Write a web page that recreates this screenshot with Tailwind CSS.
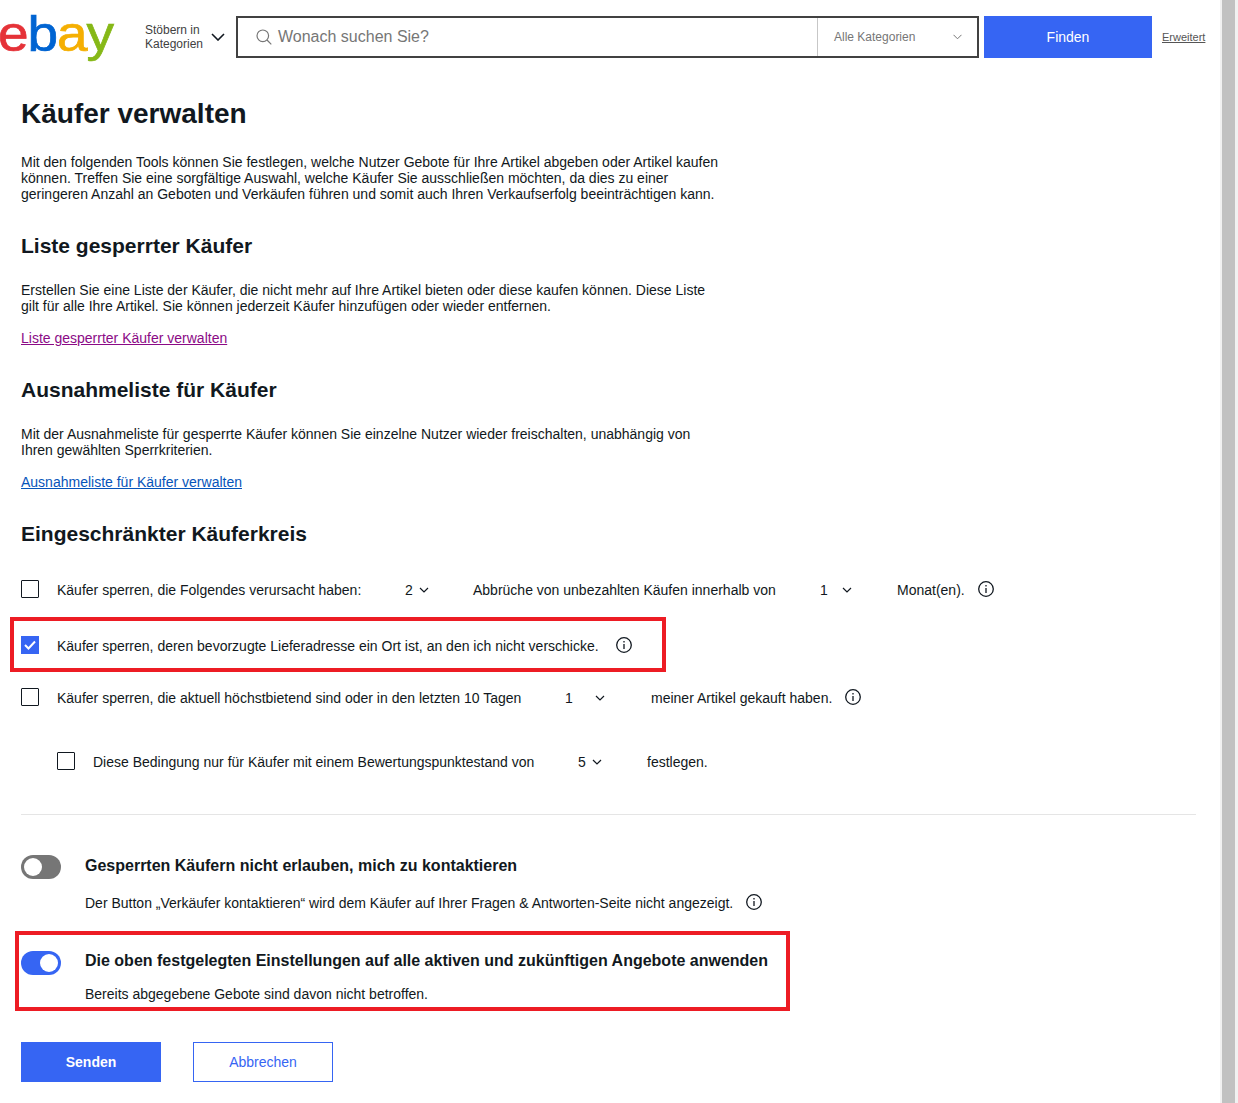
<!DOCTYPE html>
<html lang="de">
<head>
<meta charset="utf-8">
<title>Käufer verwalten</title>
<script src="https://cdn.jsdelivr.net/npm/@tailwindcss/browser@4"></script>
</head>
<body class="bg-white font-['Liberation_Sans',Arial,sans-serif] text-[14px] leading-4 text-[#111820] h-[1103px] overflow-hidden">
<div class="flex h-[1103px]">
<main class="w-[1220px] shrink-0">
  <header class="flex items-center h-[74px]">
    <div class="w-[127px] h-[60px] shrink-0 relative">
      <div class="absolute left-[-2px] top-[-3px] flex origin-left scale-x-[1.1] text-[50px] leading-[60px] tracking-[-1px] [-webkit-text-stroke:0.7px]" aria-label="ebay">
        <span class="text-[#e53238]">e</span><span class="text-[#0064d2]">b</span><span class="text-[#f5af02]">a</span><span class="text-[#86b817]">y</span>
      </div>
    </div>
    <div class="w-[64px] ml-[18px] text-[12px] leading-[14px] text-[#41413f] shrink-0">Stöbern in Kategorien</div>
    <svg class="w-[14px] h-[8px] ml-[2px] shrink-0" viewBox="0 0 14 8" fill="none" stroke="#111820" stroke-width="1.6"><path d="M1 1l6 6 6-6"/></svg>
    <div class="ml-[11px] flex w-[743px] h-[42px] border-[2px] border-[#414141] shrink-0">
      <div class="flex items-center flex-1 pl-[18px]">
        <svg class="w-[16px] h-[16px] shrink-0" viewBox="0 0 16 16" fill="none" stroke="#767676" stroke-width="1.2"><circle cx="6.8" cy="6.8" r="5.8"/><path d="M11 11l4.3 4.3"/></svg>
        <span class="ml-[6px] text-[16px] text-[#767676]">Wonach suchen Sie?</span>
      </div>
      <div class="flex items-center w-[160px] border-l border-[#c7c7c7] pl-[16px] pr-[15px] justify-between text-[12px] text-[#767676]">
        <span>Alle Kategorien</span>
        <svg class="w-[9px] h-[6px]" viewBox="0 0 9 6" fill="none" stroke="#767676" stroke-width="1"><path d="M.5.8l4 4 4-4"/></svg>
      </div>
    </div>
    <div class="ml-[5px] w-[168px] h-[42px] bg-[#3665f3] text-white flex items-center justify-center shrink-0">Finden</div>
    <a class="ml-[10px] text-[11px] text-[#555] underline">Erweitert</a>
  </header>

  <div class="pl-[21px]">
    <h1 class="text-[28px] leading-[32px] font-bold mt-[24px]">Käufer verwalten</h1>
    <p class="w-[700px] mt-[24px]">Mit den folgenden Tools können Sie festlegen, welche Nutzer Gebote für Ihre Artikel abgeben oder Artikel kaufen können. Treffen Sie eine sorgfältige Auswahl, welche Käufer Sie ausschließen möchten, da dies zu einer geringeren Anzahl an Geboten und Verkäufen führen und somit auch Ihren Verkaufserfolg beeinträchtigen kann.</p>

    <h2 class="text-[21px] leading-6 font-bold mt-[32px]">Liste gesperrter Käufer</h2>
    <p class="w-[700px] mt-[24px]">Erstellen Sie eine Liste der Käufer, die nicht mehr auf Ihre Artikel bieten oder diese kaufen können. Diese Liste gilt für alle Ihre Artikel. Sie können jederzeit Käufer hinzufügen oder wieder entfernen.</p>
    <a class="block mt-[16px] underline text-[#8b0a86]">Liste gesperrter Käufer verwalten</a>

    <h2 class="text-[21px] leading-6 font-bold mt-[32px]">Ausnahmeliste für Käufer</h2>
    <p class="w-[700px] mt-[24px]">Mit der Ausnahmeliste für gesperrte Käufer können Sie einzelne Nutzer wieder freischalten, unabhängig von Ihren gewählten Sperrkriterien.</p>
    <a class="block mt-[16px] underline text-[#0654ba]">Ausnahmeliste für Käufer verwalten</a>

    <h2 class="text-[21px] leading-6 font-bold mt-[32px]">Eingeschränkter Käuferkreis</h2>

    <div class="flex items-center mt-[34px] h-[18px]">
      <span class="w-[18px] h-[18px] border border-[#111820] rounded-[1px] shrink-0"></span>
      <span class="ml-[18px] w-[348px] shrink-0 pt-[2px]">Käufer sperren, die Folgendes verursacht haben:</span>
      <span class="w-[68px] shrink-0 flex items-center gap-[6px] pt-[2px]">2 <svg class="w-[10px] h-[6px]" viewBox="0 0 10 6" fill="none" stroke="#111820" stroke-width="1.2"><path d="M1 1l4 4 4-4"/></svg></span>
      <span class="w-[347px] shrink-0 pt-[2px]">Abbrüche von unbezahlten Käufen innerhalb von</span>
      <span class="w-[77px] shrink-0 flex items-center gap-[14px] pt-[2px]">1 <svg class="w-[10px] h-[6px]" viewBox="0 0 10 6" fill="none" stroke="#111820" stroke-width="1.2"><path d="M1 1l4 4 4-4"/></svg></span>
      <span class="pt-[2px]">Monat(en).</span>
      <svg class="w-[18px] h-[18px] ml-[12px]" viewBox="0 0 18 18" fill="none" stroke="#111820" stroke-width="1.3"><circle cx="9" cy="9" r="7.3"/><path d="M9 8v5M9 5v1.5"/></svg>
    </div>

    <div class="flex items-center ml-[-11px] mt-[19px] w-[656px] h-[55px] border-[4px] border-[#ed1c24] pl-[7px]">
      <span class="w-[18px] h-[18px] bg-[#3665f3] flex items-center justify-center shrink-0">
        <svg class="w-[12px] h-[10px]" viewBox="0 0 12 10" fill="none" stroke="#fff" stroke-width="2"><path d="M1 5l3.5 3.5L11 1.5"/></svg>
      </span>
      <span class="ml-[18px] pt-[2px]">Käufer sperren, deren bevorzugte Lieferadresse ein Ort ist, an den ich nicht verschicke.</span>
      <svg class="w-[18px] h-[18px] ml-[16px]" viewBox="0 0 18 18" fill="none" stroke="#111820" stroke-width="1.3"><circle cx="9" cy="9" r="7.3"/><path d="M9 8v5M9 5v1.5"/></svg>
    </div>

    <div class="flex items-center mt-[16px] h-[18px]">
      <span class="w-[18px] h-[18px] border border-[#111820] rounded-[1px] shrink-0"></span>
      <span class="ml-[18px] w-[508px] shrink-0 pt-[2px]">Käufer sperren, die aktuell höchstbietend sind oder in den letzten 10 Tagen</span>
      <span class="w-[86px] shrink-0 flex items-center gap-[22px] pt-[2px]">1 <svg class="w-[10px] h-[6px]" viewBox="0 0 10 6" fill="none" stroke="#111820" stroke-width="1.2"><path d="M1 1l4 4 4-4"/></svg></span>
      <span class="pt-[2px]">meiner Artikel gekauft haben.</span>
      <svg class="w-[18px] h-[18px] ml-[12px]" viewBox="0 0 18 18" fill="none" stroke="#111820" stroke-width="1.3"><circle cx="9" cy="9" r="7.3"/><path d="M9 8v5M9 5v1.5"/></svg>
    </div>

    <div class="flex items-center mt-[46px] ml-[36px] h-[18px]">
      <span class="w-[18px] h-[18px] border border-[#111820] rounded-[1px] shrink-0"></span>
      <span class="ml-[18px] w-[485px] shrink-0 pt-[2px]">Diese Bedingung nur für Käufer mit einem Bewertungspunktestand von</span>
      <span class="w-[69px] shrink-0 flex items-center gap-[6px] pt-[2px]">5 <svg class="w-[10px] h-[6px]" viewBox="0 0 10 6" fill="none" stroke="#111820" stroke-width="1.2"><path d="M1 1l4 4 4-4"/></svg></span>
      <span class="pt-[2px]">festlegen.</span>
    </div>

    <hr class="w-[1175px] mt-[44px] border-t border-[#e5e5e5]">

    <div class="flex items-center mt-[40px] h-[24px]">
      <span class="w-[40px] h-[24px] rounded-full bg-[#767676] flex items-center pl-[3px] shrink-0"><span class="w-[18px] h-[18px] rounded-full bg-white"></span></span>
      <span class="ml-[24px] text-[16px] font-bold pb-[2px]">Gesperrten Käufern nicht erlauben, mich zu kontaktieren</span>
    </div>
    <div class="flex items-center ml-[64px] mt-[14px] h-[18px]">
      <span class="pt-[2px]">Der Button „Verkäufer kontaktieren“ wird dem Käufer auf Ihrer Fragen &amp; Antworten-Seite nicht angezeigt.</span>
      <svg class="w-[18px] h-[18px] ml-[12px]" viewBox="0 0 18 18" fill="none" stroke="#111820" stroke-width="1.3"><circle cx="9" cy="9" r="7.3"/><path d="M9 8v5M9 5v1.5"/></svg>
    </div>

    <div class="ml-[-6px] mt-[20px] w-[775px] h-[80px] border-[4px] border-[#ed1c24] pl-[2px] pt-[16px]">
      <div class="flex items-center h-[24px]">
        <span class="w-[40px] h-[24px] rounded-full bg-[#3665f3] flex items-center justify-end pr-[3px] shrink-0"><span class="w-[18px] h-[18px] rounded-full bg-white"></span></span>
        <span class="ml-[24px] text-[16px] font-bold whitespace-nowrap pb-[4px]">Die oben festgelegten Einstellungen auf alle aktiven und zukünftigen Angebote anwenden</span>
      </div>
      <p class="ml-[64px] mt-[11px]">Bereits abgegebene Gebote sind davon nicht betroffen.</p>
    </div>

    <div class="flex gap-[32px] mt-[31px]">
      <div class="w-[140px] h-[40px] bg-[#3665f3] text-white font-bold flex items-center justify-center">Senden</div>
      <div class="w-[140px] h-[40px] border border-[#3665f3] text-[#3665f3] flex items-center justify-center">Abbrechen</div>
    </div>
  </div>
</main>
<div class="w-[18px] shrink-0 h-full bg-[#f1f1f1] flex"><div class="ml-[2px] w-[13px] bg-[#c1c1c1]"></div></div>
</div>
</body>
</html>
